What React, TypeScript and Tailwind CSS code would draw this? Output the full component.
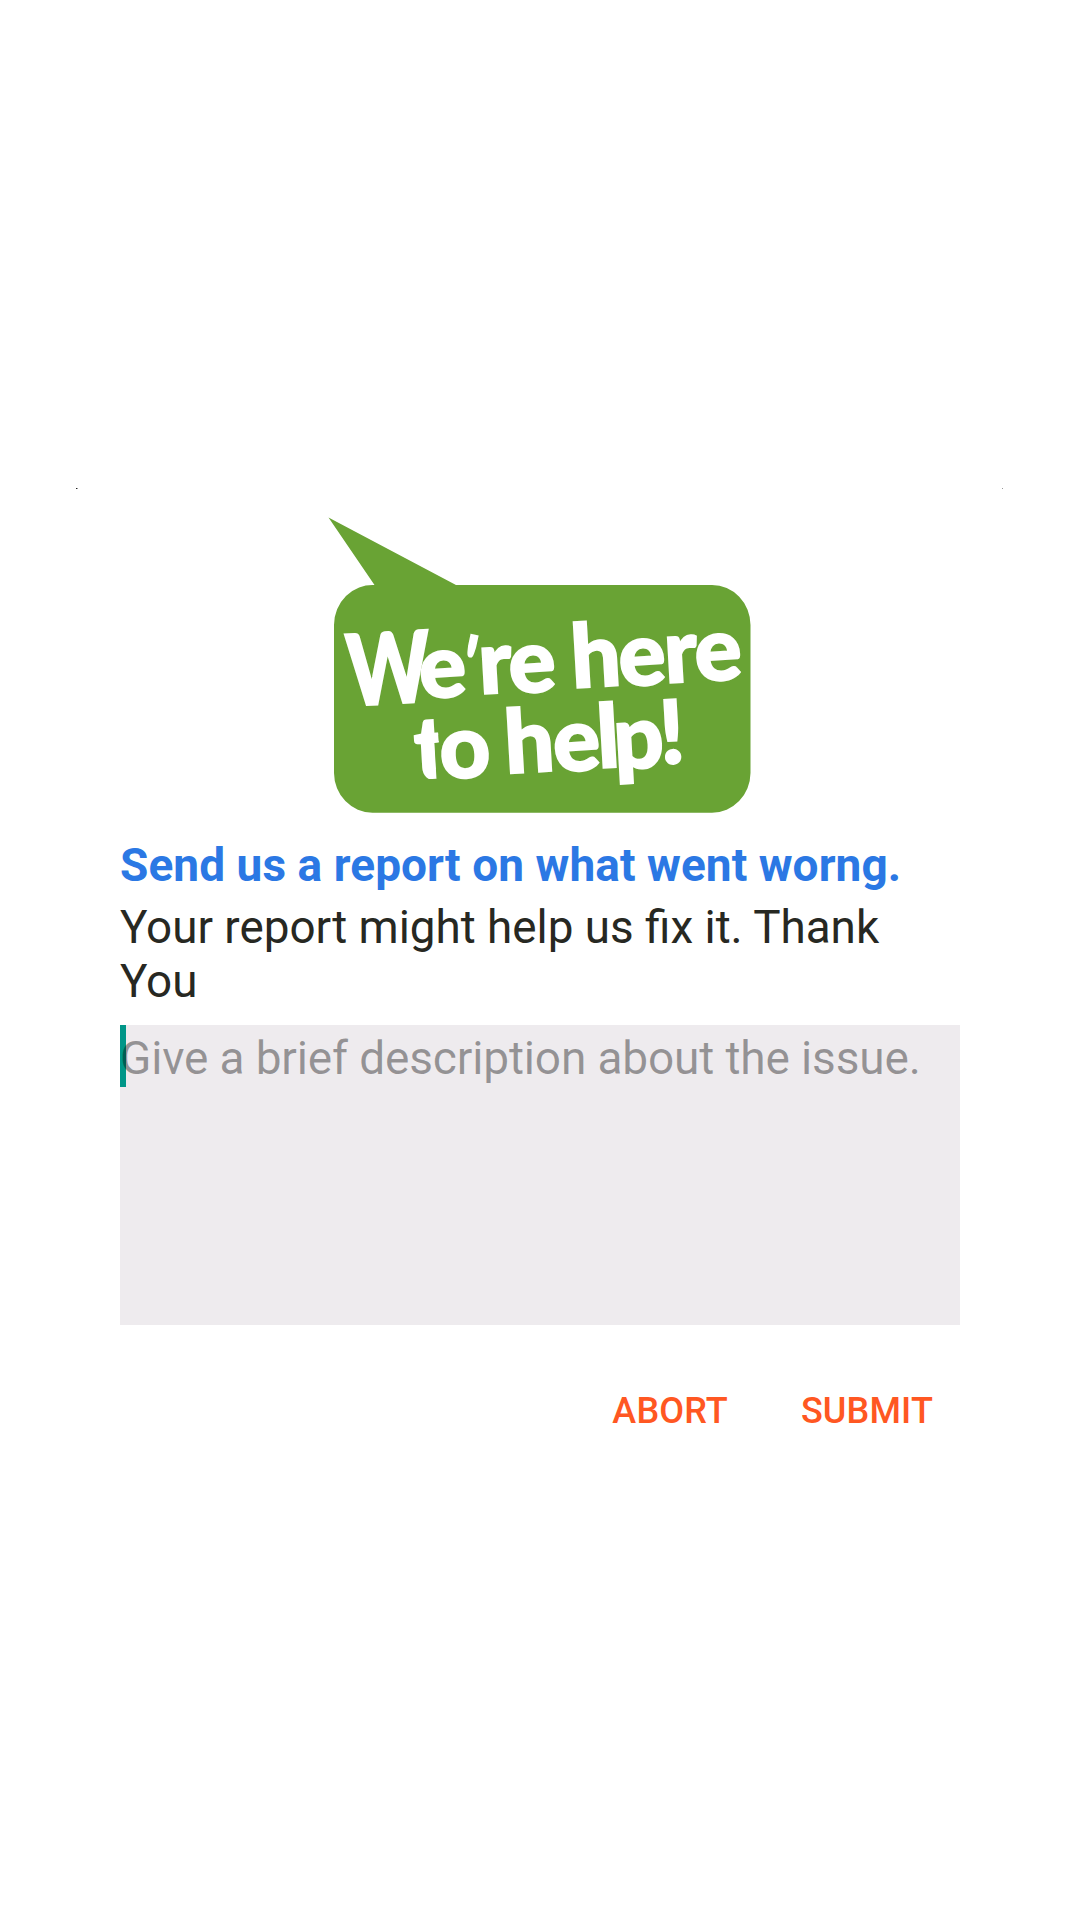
const LETTERING = "Lato, 'Liberation Sans', sans-serif";

function HelpBubble() {
  return (
    <svg
      className="mx-auto block h-[300px] w-[430px] shrink-0"
      viewBox="325 515 430 300"
      role="img"
      aria-label="We're here to help!"
    >
      <defs>
        <clipPath id="t-stem">
          <path d="M-2 -80 H25 V-36 H20.5 V0 H-2 Z" />
        </clipPath>
      </defs>
      <path
        fill="#69a334"
        d="M328.5 517.5 L456 585 H712 A38.5 40 0 0 1 750.5 625 V773 A38.5 40 0 0 1 712 812.7 H372.5 A38.5 40 0 0 1 334 773 V625 A38.5 40 0 0 1 374.5 585 Z"
      />
      <g
        fill="#ffffff"
        stroke="#ffffff"
        strokeWidth="2"
        fontFamily={LETTERING}
        fontWeight="900"
        fontSize="88"
      >
        <text transform="translate(348.5 706) rotate(-3.3) scale(0.9 1.12)">W</text>
        <text x="420.5" y="698.5" rotate="-3.3">
          e
        </text>
        <text transform="translate(456.5 690.5) rotate(12) scale(0.65 0.9)">&#39;</text>
        <text x="480 510" y="694 693.5" rotate="-3.3">
          re
        </text>
        <text x="572.5 620 665.5 696" y="688 686.5 683 681.5" rotate="-3.3">
          here
        </text>
        <g transform="translate(416 780) rotate(-3.3)">
          <text clipPath="url(#t-stem)">t</text>
        </g>
        <text x="441" y="779" rotate="-3.3">
          o
        </text>
        <text x="506 554.5 598.5 615 661" y="773.5 772 768 769.5 764" rotate="-3.3">
          help!
        </text>
      </g>
    </svg>
  );
}

function ActionButton({ label }: { label: string }) {
  return (
    <button
      type="button"
      className="text-[36px] leading-[42px] font-medium tracking-[0.15px] text-[#ff5722]"
    >
      {label}
    </button>
  );
}

export default function App() {
  return (
    <main className="flex h-[1920px] w-[1080px] flex-col bg-white px-[76px] pt-[488px] font-[Roboto,sans-serif]">
      <section className="flex flex-col">
        <div className="flex h-0.5 items-start justify-between">
          <span className="flex">
            <span className="h-px w-px bg-[#222222]" />
            <span className="h-px w-px bg-[#999999]" />
          </span>
          <span className="mr-px h-px w-px bg-[#999999]" />
        </div>
        <div className="flex flex-col px-[44px] pt-[25px]">
          <HelpBubble />
          <h1 className="mt-[23px] text-[46px] leading-[54px] font-bold tracking-[0.06px] text-[#2b78e4]">
            Send us a report on what went worng.
          </h1>
          <p className="mt-[9px] text-[45.8px] leading-[54px] text-[#272822]">
            Your report might help us fix it. Thank You
          </p>
          <div className="relative mt-[16px] h-[300px] bg-[#eeebee] pt-[6px]">
            <span className="absolute top-0 left-0 h-[62px] w-[6px] bg-[#009688]" />
            <p className="relative text-[46px] leading-[54px] tracking-[-0.15px] whitespace-nowrap text-black/38">
              Give a brief description about the issue.
            </p>
          </div>
          <div className="mt-[65px] flex justify-end gap-[73px] pr-[27px]">
            <ActionButton label="ABORT" />
            <ActionButton label="SUBMIT" />
          </div>
        </div>
      </section>
    </main>
  );
}
